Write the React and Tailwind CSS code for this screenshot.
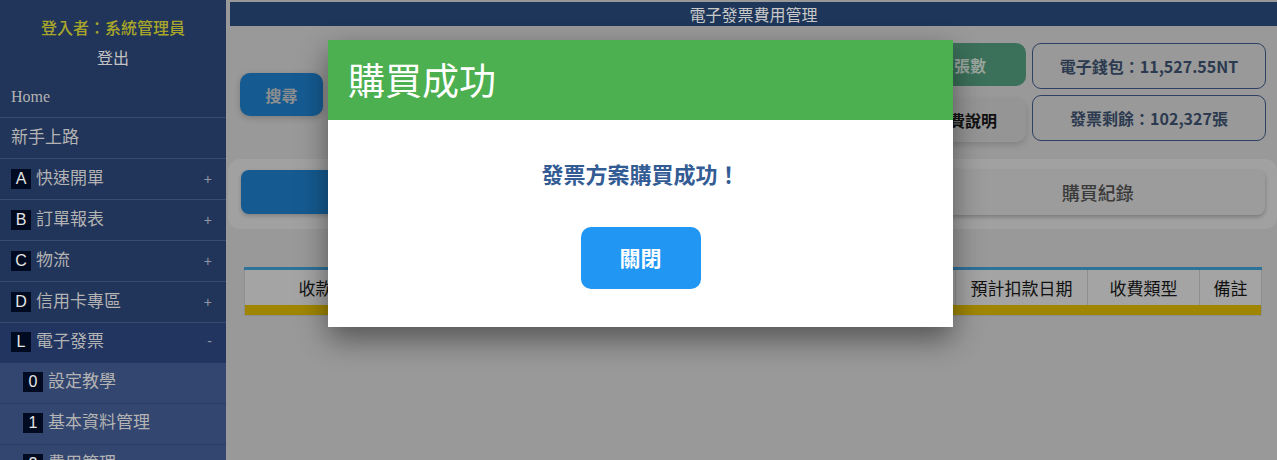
import React from "react";

const FONT = { fontFamily: '"Noto Sans CJK TC", "Noto Sans", sans-serif' };
const SIDE_FONT = { fontFamily: '"Liberation Serif", "Noto Sans CJK TC", serif' };

const menu = [
  { badge: "A", label: "快速開單", sign: "+" },
  { badge: "B", label: "訂單報表", sign: "+" },
  { badge: "C", label: "物流", sign: "+" },
  { badge: "D", label: "信用卡專區", sign: "+" },
  { badge: "L", label: "電子發票", sign: "-" },
];

const subMenu = [
  { badge: "0", label: "設定教學" },
  { badge: "1", label: "基本資料管理" },
  { badge: "2", label: "費用管理" },
];

const columns = [
  { label: "收款日期", w: "w-[176px]" },
  { label: "方案名稱", w: "w-[200px]" },
  { label: "金額", w: "w-[170px]" },
  { label: "張數", w: "w-[165px]" },
  { label: "預計扣款日期", w: "w-[132px]" },
  { label: "收費類型", w: "w-[112px]" },
  { label: "備註", w: "flex-1" },
];

const Badge = ({ children }) => (
  <span
    className="w-5 h-5 bg-[#000b21] text-[#e6e6e6] text-[16px] leading-5 flex items-center justify-center"
    style={{ fontFamily: '"Liberation Sans", sans-serif' }}
  >
    {children}
  </span>
);

const Sidebar = () => (
  <aside className="w-[226px] h-[460px] shrink-0 bg-[#213459] overflow-hidden" style={SIDE_FONT}>
    <div className="h-[77px] pt-[12px] text-center text-[16px]" style={FONT}>
      <div className="leading-[30px] font-medium text-[#a8a62a]">登入者：系統管理員</div>
      <div className="leading-[30px] text-[#c2c2c2]">登出</div>
    </div>
    <div className="h-[41px] border-b border-[#3b4b6d] flex items-center px-[11px] text-[16px] text-[#b3b3b3]">
      Home
    </div>
    <div className="h-[41px] border-b border-[#3b4b6d] flex items-center px-[11px] text-[17px] text-[#b3b3b3]">
      新手上路
    </div>
    {menu.map((m, i) => (
      <div
        key={m.badge}
        className={`flex items-center pl-[11px] pr-[14px] text-[17px] text-[#b3b3b3] ${
          i === menu.length - 1 ? "h-[40px] pb-[3px] bg-[#223560]" : "h-[41px] border-b border-[#3b4b6d]"
        }`}
      >
        <Badge>{m.badge}</Badge>
        <span className="ml-[5px] flex-1">{m.label}</span>
        <span className="text-[14px] text-[#8f97a8]" style={{ fontFamily: '"Liberation Sans", sans-serif' }}>
          {m.sign}
        </span>
      </div>
    ))}
    {subMenu.map((s) => (
      <div
        key={s.badge}
        className="h-[41px] pb-[2px] bg-[#33466f] border-b border-[#2c3d65] flex items-center pl-[23px] text-[17px] text-[#b3b3b3]"
      >
        <Badge>{s.badge}</Badge>
        <span className="ml-[5px]">{s.label}</span>
      </div>
    ))}
  </aside>
);

const Main = () => (
  <main className="flex-1 h-[460px] bg-[#999999] overflow-hidden" style={FONT}>
    <div className="ml-[4px] mt-[2px] h-[24px] bg-[#1e3659] text-center text-[16px] leading-[24px] text-[#c9c9c9]">
      電子發票費用管理
    </div>

    {/* top row */}
    <div className="mt-[17px] flex items-center justify-between pl-[14px] pr-[11px]">
      <button className="mt-[4px] w-[83px] h-[43px] rounded-[10px] bg-[#155b92] text-[#8e8e8e] text-[16px] font-bold shadow-[0_2px_6px_rgba(0,0,0,0.2)]">
        搜尋
      </button>
      <div className="flex gap-[6px]">
        <div className="flex flex-col gap-[12px]">
          <button className="w-[176px] h-[43px] rounded-[10px] bg-[#3b705a] text-[#9ba69f] text-[16px] font-bold">
            購買發票張數
          </button>
          <button className="w-[176px] h-[44px] rounded-[10px] bg-[#959595] text-[#111] text-[16px] font-bold shadow-[0_3px_6px_rgba(0,0,0,0.15)] pl-[54px]">
            收費說明
          </button>
        </div>
        <div className="flex flex-col gap-[6px] w-[234px]">
          <div className="h-[46px] rounded-[9px] border border-[#2f4163] flex items-center justify-center text-[16px] font-bold text-[#2c3a50]">
            電子錢包：11,527.55NT
          </div>
          <div className="h-[46px] rounded-[9px] border border-[#2f4163] flex items-center justify-center text-[16px] font-bold text-[#2c3a50]">
            發票剩餘：102,327張
          </div>
        </div>
      </div>
    </div>

    {/* tabs */}
    <div className="mt-[17px] ml-[2px] h-[70px] rounded-[12px] bg-[#a1a1a1] flex gap-[10px] pl-[13px] pr-[12px] pt-[11px]">
      <div className="flex-1 h-[44px] rounded-[8px] bg-[#155b92] shadow-[0_2px_4px_rgba(0,0,0,0.2)]" />
      <div className="flex-1 h-[45px] rounded-[8px] bg-[#9c9c9c] shadow-[0_2px_4px_rgba(0,0,0,0.25)]" />
      <div className="flex-1 h-[45px] rounded-[8px] bg-[#9c9c9c] shadow-[0_2px_4px_rgba(0,0,0,0.25)] flex items-center justify-center text-[18px] font-medium text-[#3a3a3a]">
        購買紀錄
      </div>
    </div>

    {/* table */}
    <div className="mt-[38px] ml-[18px] mr-[15px] border-t-[3px] border-[#2e7199]">
      <div className="flex h-[35px] bg-[#a4a4a4] border-x border-[#8e8e8e]">
        {columns.map((c, i) => (
          <div
            key={c.label}
            className={`${c.w} flex items-center justify-center text-[17px] text-[#111] ${
              i < columns.length - 1 ? "border-r border-[#8e8e8e]" : ""
            }`}
          >
            {c.label}
          </div>
        ))}
      </div>
      <div className="h-[11px] bg-[#a08600] border-x border-b border-[#8e8e8e]" />
    </div>
  </main>
);

const Modal = () => (
  <div className="absolute left-[328px] top-[40px] w-[625px] bg-white shadow-[0_12px_28px_rgba(0,0,0,0.45)]" style={FONT}>
    <div className="h-[80px] bg-[#4caf50] flex items-center pl-[20px] text-[37px] text-white">
      購買成功
    </div>
    <div className="pt-[37px] pb-[38px] flex flex-col items-center">
      <div className="h-[32px] leading-[32px] text-[22px] font-bold text-[#335b94]">
        發票方案購買成功！
      </div>
      <button className="mt-[38px] w-[120px] h-[62px] rounded-[10px] bg-[#2196f3] text-white text-[21px] font-bold">
        關閉
      </button>
    </div>
  </div>
);

export default function App() {
  return (
    <div className="relative w-[1277px] h-[460px] overflow-hidden flex">
      <Sidebar />
      <Main />
      <Modal />
    </div>
  );
}
